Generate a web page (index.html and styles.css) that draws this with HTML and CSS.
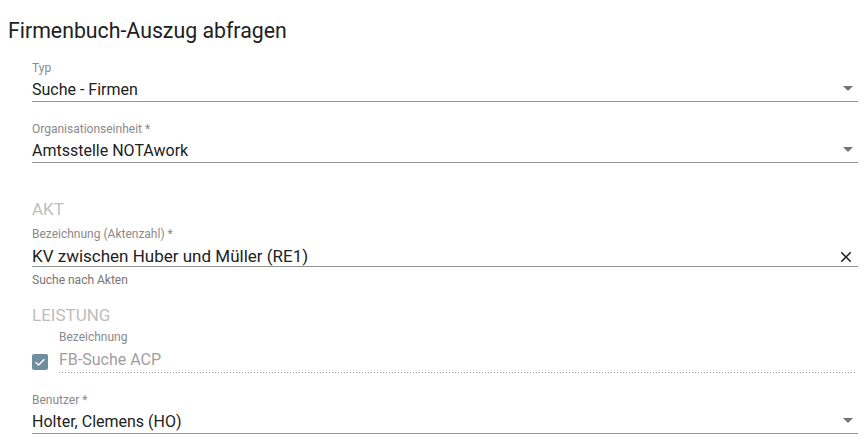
FILE: index.html
```html
<!DOCTYPE html>
<html lang="de">
<head>
<meta charset="utf-8">
<title>Firmenbuch-Auszug abfragen</title>
<link rel="stylesheet" href="styles.css">
</head>
<body>
<div class="page">
  <h1 class="title">Firmenbuch-Auszug abfragen</h1>
  <form class="form">
    <div class="field">
      <div class="label">Typ</div>
      <div class="row">
        <span class="value">Suche - Firmen</span>
        <span class="arrow"></span>
      </div>
    </div>
    <div class="field">
      <div class="label">Organisationseinheit *</div>
      <div class="row">
        <span class="value">Amtsstelle NOTAwork</span>
        <span class="arrow"></span>
      </div>
    </div>

    <div class="section section-akt">AKT</div>
    <div class="field field-hinted">
      <div class="label">Bezeichnung (Aktenzahl) *</div>
      <div class="row row-clear">
        <span class="value value-clear">KV zwischen Huber und Müller (RE1)</span>
        <svg class="clear" viewBox="0 0 24 24" width="18" height="18"><path d="M19 6.41L17.59 5 12 10.59 6.41 5 5 6.41 10.59 12 5 17.59 6.41 19 12 13.41 17.59 19 19 17.59 13.41 12z" fill="#212121"/></svg>
      </div>
      <div class="hint">Suche nach Akten</div>
    </div>

    <div class="section section-leistung">LEISTUNG</div>
    <div class="check-field">
      <span class="checkbox">
        <svg viewBox="0 0 16 16" width="16" height="16"><path d="M3.6 8.2 L6.6 11 L12.4 5.2" fill="none" stroke="#fff" stroke-width="1.4"/></svg>
      </span>
      <div class="check-body">
        <div class="label">Bezeichnung</div>
        <div class="row row-disabled">
          <span class="value value-disabled">FB-Suche ACP</span>
        </div>
      </div>
    </div>

    <div class="field">
      <div class="label">Benutzer *</div>
      <div class="row">
        <span class="value">Holter, Clemens (HO)</span>
        <span class="arrow"></span>
      </div>
    </div>
  </form>
</div>
</body>
</html>
```
FILE: styles.css
```css
html, body {
  margin: 0;
  padding: 0;
  background: #fff;
}
body {
  font-family: Roboto, "Noto Sans", "Liberation Sans", sans-serif;
  color: #212121;
}
.page {
  padding: 0 8px;
}
.title {
  margin: 0;
  padding-top: 17px;
  font-size: 21.3px;
  line-height: 28px;
  font-weight: 400;
  color: #212121;
}
.form {
  margin-top: 15px;
  padding-left: 24px;
}
.field {
  margin-bottom: 19px;
}
.label {
  font-size: 12px;
  line-height: 16px;
  color: #8a8a8a;
}
.row {
  display: flex;
  align-items: flex-start;
  height: 25px;
  border-bottom: 1px solid #949494;
}
.value {
  flex: 1;
  font-size: 16px;
  line-height: 22px;
  padding-top: 3px;
  color: #212121;
  white-space: nowrap;
}
.arrow {
  align-self: center;
  width: 0;
  height: 0;
  border-left: 5px solid transparent;
  border-right: 5px solid transparent;
  border-top: 5px solid #757575;
  margin-right: 5px;
}
.section {
  font-size: 17px;
  line-height: 20px;
  color: #bdbdbd;
}
.section-akt {
  margin-top: 36px;
  margin-bottom: 7px;
}
.field-hinted {
  margin-bottom: 0;
}
.row-clear {
  height: 24px;
}
.value-clear {
  font-size: 17px;
  line-height: 24px;
  padding-top: 2px;
}
.clear {
  align-self: flex-end;
  margin-right: 3px;
}
.hint {
  margin-top: 5px;
  font-size: 12px;
  line-height: 16px;
  color: #757575;
}
.section-leistung {
  margin-top: 17px;
}
.check-field {
  display: flex;
  align-items: flex-end;
  margin-top: 4px;
  margin-bottom: 19px;
}
.checkbox {
  width: 16px;
  height: 16px;
  flex: none;
  background: #6f8e9f;
  border-radius: 2px;
  margin-right: 11px;
  margin-bottom: 3px;
  display: flex;
}
.check-body {
  flex: 1;
}
.row-disabled {
  margin-top: 3px;
  height: 25px;
  border-bottom: none;
  background-image: linear-gradient(to right, #9a9a9a 0, #9a9a9a 1px, transparent 1px);
  background-size: 3px 1px;
  background-repeat: repeat-x;
  background-position: 0 bottom;
  margin-right: 1px;
}
.value-disabled {
  padding-top: 1px;
  color: #9e9e9e;
}
```
